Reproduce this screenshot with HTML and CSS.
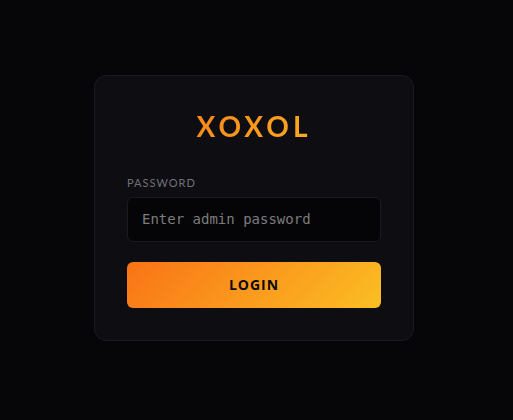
FILE: index.html
```
<!DOCTYPE html>
<html lang="en">
<head>
    <meta charset="UTF-8">
    <meta name="viewport" content="width=device-width, initial-scale=1.0">
    <title>XOXOL Admin</title>
    <link rel="stylesheet" href="styles.css">
</head>
<body>
    <main class="login-card">
        <h1 class="logo">XOXOL</h1>
        <form class="login-form" method="post">
            <label for="password">Password</label>
            <input type="password" id="password" name="password" placeholder="Enter admin password" required>
            <button type="submit">LOGIN</button>
        </form>
    </main>
</body>
</html>
```
FILE: styles.css
```
* {
    box-sizing: border-box;
    margin: 0;
    padding: 0;
}

body {
    display: flex;
    align-items: center;
    justify-content: center;
    min-height: 100vh;
    padding: 0 5px 4px 0;
    background: #060608;
    font-family: Lato, sans-serif;
}

.login-card {
    width: 100%;
    max-width: 320px;
    padding: 32px;
    background: #0d0d12;
    border: 1px solid #1a1a22;
    border-radius: 12px;
}

.logo {
    margin-bottom: 32px;
    font-size: 28px;
    font-weight: 700;
    line-height: 36px;
    letter-spacing: 4px;
    text-align: center;
    background: linear-gradient(135deg, #f97316, #fbbf24);
    -webkit-background-clip: text;
    background-clip: text;
    color: transparent;
}

.login-form {
    display: flex;
    flex-direction: column;
}

label {
    margin-bottom: 7px;
    color: #71717a;
    font-size: 11px;
    line-height: 14px;
    letter-spacing: 1px;
    text-transform: uppercase;
}

input {
    width: 100%;
    height: 45px;
    margin-bottom: 20px;
    padding: 0 14px 2px;
    background: #050507;
    border: 1px solid #1a1a25;
    border-radius: 6px;
    color: #e4e4e7;
    font-family: "DejaVu Sans Mono", monospace;
    font-size: 14px;
}

input::placeholder {
    color: #7c7c7c;
}

input:focus {
    outline: none;
    border-color: #f97316;
}

button {
    height: 46px;
    padding-bottom: 2px;
    background: linear-gradient(135deg, #f97316, #fbbf24);
    border: none;
    border-radius: 6px;
    color: #0a0a0c;
    font-family: "Open Sans", sans-serif;
    font-size: 14px;
    font-weight: 700;
    letter-spacing: 1px;
    cursor: pointer;
}
```
